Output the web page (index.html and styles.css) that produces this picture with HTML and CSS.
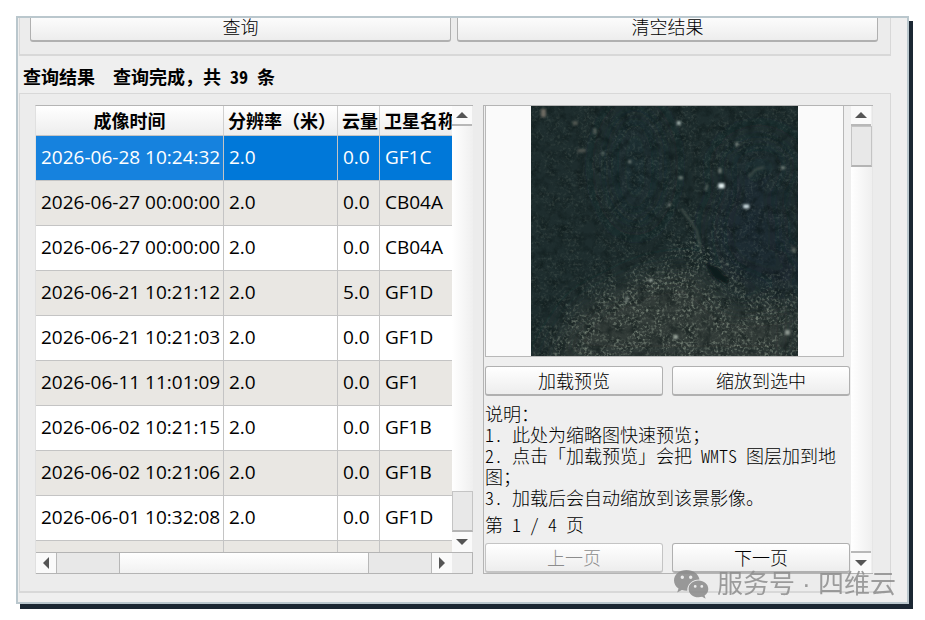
FILE: index.html
```
<!DOCTYPE html>
<html lang="zh-CN">
<head>
    <meta charset="UTF-8">
    <meta name="viewport" content="width=device-width, initial-scale=1.0">
    <title>查询结果</title>
    <link rel="stylesheet" href="styles.css">
</head>
<body>
    <main class="window">
        <div class="query-bar">
            <button type="button" class="btn">查询</button>
            <button type="button" class="btn">清空结果</button>
        </div>

        <h2 class="title">查询结果<span class="latin">  </span>查询完成，共<span class="latin"> 39 </span>条</h2>

        <section class="results">
            <!-- Scene list -->
            <div class="list">
                <div class="table-view">
                    <table>
                        <colgroup>
                            <col class="col-time">
                            <col class="col-res">
                            <col class="col-cloud">
                            <col class="col-sat">
                        </colgroup>
                        <thead>
                            <tr><th>成像时间</th><th>分辨率（米）</th><th>云量</th><th>卫星名称</th></tr>
                        </thead>
                        <tbody>
                            <tr class="selected"><td>2026-06-28 10:24:32</td><td>2.0</td><td>0.0</td><td>GF1C</td></tr>
                            <tr><td>2026-06-27 00:00:00</td><td>2.0</td><td>0.0</td><td>CB04A</td></tr>
                            <tr><td>2026-06-27 00:00:00</td><td>2.0</td><td>0.0</td><td>CB04A</td></tr>
                            <tr><td>2026-06-21 10:21:12</td><td>2.0</td><td>5.0</td><td>GF1D</td></tr>
                            <tr><td>2026-06-21 10:21:03</td><td>2.0</td><td>0.0</td><td>GF1D</td></tr>
                            <tr><td>2026-06-11 11:01:09</td><td>2.0</td><td>0.0</td><td>GF1</td></tr>
                            <tr><td>2026-06-02 10:21:15</td><td>2.0</td><td>0.0</td><td>GF1B</td></tr>
                            <tr><td>2026-06-02 10:21:06</td><td>2.0</td><td>0.0</td><td>GF1B</td></tr>
                            <tr><td>2026-06-01 10:32:08</td><td>2.0</td><td>0.0</td><td>GF1D</td></tr>
                            <tr><td></td><td></td><td></td><td></td></tr>
                        </tbody>
                    </table>
                </div>
                <div class="vscroll">
                    <button type="button" class="arrow up" aria-label="向上"></button>
                    <div class="track"></div>
                    <div class="thumb"></div>
                    <button type="button" class="arrow down" aria-label="向下"></button>
                </div>
                <div class="hscroll">
                    <button type="button" class="arrow left" aria-label="向左"></button>
                    <div class="thumb"></div>
                    <div class="track"></div>
                    <div class="thumb"></div>
                    <button type="button" class="arrow right" aria-label="向右"></button>
                </div>
                <div class="corner"></div>
            </div>

            <!-- Preview panel -->
            <div class="panel">
                <div class="panel-body">
                    <div class="preview">
                        <svg class="scene" viewBox="0 0 270 249" preserveAspectRatio="none" aria-hidden="true">
                            <defs>
                                <filter id="grain" x="0" y="0" width="100%" height="100%" color-interpolation-filters="sRGB">
                                    <feTurbulence type="fractalNoise" baseFrequency="0.11" numOctaves="5" seed="7"/>
                                    <feColorMatrix values="0 0 0 0 0.03  0 0 0 0 0.07  0 0 0 0 0.07  2.4 0 0 0 -1"/>
                                </filter>
                                <filter id="specks" x="0" y="0" width="100%" height="100%" color-interpolation-filters="sRGB">
                                    <feTurbulence type="fractalNoise" baseFrequency="0.37" numOctaves="2" seed="21" result="fine"/>
                                    <feColorMatrix values="0 0 0 0 0.5  0 0 0 0 0.55  0 0 0 0 0.5  0 2.4 0 0 -1.1" result="points"/>
                                    <feTurbulence type="fractalNoise" baseFrequency="0.06" numOctaves="3" seed="4"/>
                                    <feColorMatrix values="0 0 0 0 0  0 0 0 0 0  0 0 0 0 0  3 0 0 0 -0.8" result="patches"/>
                                    <feComposite in="points" in2="patches" operator="in"/>
                                    <feGaussianBlur stdDeviation="0.5"/>
                                </filter>
                                <filter id="soft" x="-30%" y="-30%" width="160%" height="160%">
                                    <feGaussianBlur stdDeviation="14"/>
                                </filter>
                                <filter id="dot" x="-50%" y="-50%" width="200%" height="200%">
                                    <feGaussianBlur stdDeviation="0.9"/>
                                </filter>
                                <mask id="land">
                                    <rect width="270" height="249" fill="#444"/>
                                    <path d="M0 270 L40 205 L95 165 L150 150 L170 110 L190 150 L215 190 L270 180 L290 270 Z" fill="#fff" filter="url(#soft)"/>
                                </mask>
                            </defs>
                            <rect width="270" height="249" fill="#1e2d2e"/>
                            <g filter="url(#soft)">
                                <ellipse cx="230" cy="60" rx="38" ry="30" fill="#1d2d32"/>
                                <ellipse cx="222" cy="125" rx="38" ry="50" fill="#1c2b33"/>
                                <ellipse cx="255" cy="165" rx="30" ry="22" fill="#1b2a33"/>
                                <ellipse cx="105" cy="60" rx="30" ry="60" fill="#1d2d30"/>
                                <path d="M10 260 L50 200 L110 170 L165 160 L200 200 L270 195 V260 Z" fill="#303b37"/>
                            </g>
                            <rect width="270" height="249" filter="url(#grain)" opacity="0.5"/>
                            <g mask="url(#land)"><rect width="270" height="249" filter="url(#specks)"/></g>
                            <path d="M175 156 L187 160 L200 174 L197 177 L184 171 Z" fill="#101a1c" filter="url(#dot)"/>
                            <g fill="#76817b" filter="url(#dot)">
                                <path d="M152 103 L158 111 L167 124 L171 142" fill="none" stroke="#3f4d49" stroke-width="2"/>
                                <path d="M219 71 L227 63 L235 61" fill="none" stroke="#3f4d49" stroke-width="2"/>
                                <path d="M176 84 L178 78" stroke="#5b6763" stroke-width="2"/>
                                <rect x="10" y="3" width="5" height="8" fill="#6c6961"/>
                                <rect x="42" y="15" width="5" height="4" fill="#515751"/>
                                <rect x="47" y="43" width="8" height="3" fill="#515751"/>
                                <rect x="63" y="22" width="3" height="6" fill="#56605b"/>
                                <rect x="147" y="15" width="4" height="4" fill="#9baaa7"/>
                                <rect x="189" y="77" width="6" height="5" fill="#e5f2f2"/>
                                <rect x="214" y="98" width="6" height="4" fill="#cbdbe0"/>
                                <rect x="189" y="62" width="3" height="5"/>
                                <rect x="206" y="36" width="3" height="4"/>
                                <rect x="149" y="70" width="4" height="3"/>
                                <rect x="71" y="46" width="3" height="2"/>
                                <rect x="98" y="54" width="3" height="3"/>
                                <rect x="138" y="97" width="3" height="3"/>
                                <rect x="252" y="60" width="4" height="3"/>
                                <rect x="263" y="141" width="4" height="5" fill="#59645f"/>
                                <rect x="119" y="172" width="4" height="3" fill="#9aa59c"/>
                                <rect x="95" y="190" width="3" height="5"/>
                                <rect x="144" y="228" width="4" height="4" fill="#a0aba3"/>
                                <rect x="256" y="223" width="5" height="5" fill="#8e9892"/>
                            </g>
                        </svg>
                    </div>
                    <div class="btn-row">
                        <button type="button" class="btn">加载预览</button>
                        <button type="button" class="btn">缩放到选中</button>
                    </div>
                    <div class="notes">
                        说明：<br>
                        <span class="latin">1. </span>此处为缩略图快速预览；<br>
                        <span class="latin">2. </span>点击「加载预览」会把<span class="latin"> WMTS </span>图层加到地图；<br>
                        <span class="latin">3. </span>加载后会自动缩放到该景影像。
                    </div>
                    <div class="page-info">第<span class="latin"> 1 / 4 </span>页</div>
                    <div class="btn-row">
                        <button type="button" class="btn" disabled>上一页</button>
                        <button type="button" class="btn">下一页</button>
                    </div>
                </div>
                <div class="vscroll">
                    <button type="button" class="arrow up" aria-label="向上"></button>
                    <div class="thumb"></div>
                    <div class="track"></div>
                    <button type="button" class="arrow down" aria-label="向下"></button>
                </div>
            </div>
        </section>

        <div class="watermark">
            <svg class="wechat" viewBox="0 0 36 30" aria-hidden="true">
                <path fill-rule="evenodd" d="M13.500 1C6.300 1 1 5.600 1 11.500c0 3.300 1.700 6.100 4.500 8l-1.300 4 4.700-2.400c1.500.4 3 .6 4.600.6h.8c-.3-6.300 5-11.100 12.200-11.100C25.500 5 20.300 1 13.500 1ZM9.300 6.500a1.700 1.700 0 1 1 0 3.400 1.700 1.700 0 0 1 0-3.400Zm8.400 0a1.700 1.700 0 1 1 0 3.400 1.700 1.700 0 0 1 0-3.400Z"/>
                <path fill-rule="evenodd" d="M25.500 11.500c-5.500 0-9.900 3.700-9.900 8.400s4.400 8.400 9.900 8.400c1.300 0 2.500-.2 3.600-.5l3.500 1.900-1-3.200c2.300-1.600 3.700-3.900 3.700-6.600 0-4.700-4.300-8.400-9.800-8.400ZM22.200 16a1.400 1.400 0 1 1 0 2.800 1.400 1.400 0 0 1 0-2.800Zm6.600 0a1.400 1.400 0 1 1 0 2.800 1.400 1.400 0 0 1 0-2.800Z"/>
            </svg>
            <span>服务号 · 四维云</span>
        </div>
    </main>
</body>
</html>
```
FILE: styles.css
```
* {
    box-sizing: border-box;
}
body {
    margin: 0;
    height: 100vh;
    padding: 16px;
    display: flex;
    background: #fff;
    color: #000;
    font-family: "Noto Sans CJK SC", sans-serif;
    font-size: 18px;
    line-height: 21px;
}

/* Window frame */
.window {
    position: relative;
    flex: 1;
    min-width: 0;
    display: flex;
    flex-direction: column;
    padding: 0 16px 9px 1px;
    border: 2px solid #bac7cd;
    background: #efefef;
    box-shadow: 4px 5px 0 #1b2733;
    overflow: hidden;
}

/* Latin text is set at half the width of a Chinese character */
.latin {
    font-feature-settings: "hwid";
    white-space: pre-wrap;
}

/* Buttons */
.btn {
    flex: 1;
    height: 30px;
    padding: 0 0 2px;
    border: 1px solid #b0b0b0;
    border-bottom: 2px solid #b0b0b0;
    border-radius: 3px;
    background: linear-gradient(#fff, #ededed);
    color: #000;
    font-family: inherit;
    font-size: 18px;
    font-weight: 300;
    line-height: 24px;
}
.btn:disabled {
    border-color: #c4c4c4;
    color: #8c8c8c;
}
.query-bar {
    display: flex;
    gap: 6px;
    margin-top: -6px;
    padding: 0 12px 12px 10px;
    border: 1px solid #d8d8d8;
    border-width: 0 1px 2px 1px;
    background: #ececec;
}
.btn-row {
    display: flex;
    gap: 9px;
}

.title {
    margin: 0;
    padding: 10px 4px 7px;
    font-size: 18px;
    font-weight: bold;
    line-height: 20px;
}

/* Results group */
.results {
    flex: 1;
    min-height: 0;
    display: flex;
    gap: 10px;
    padding: 11px 17px 17px 15px;
    border: 1px solid #d8d8d8;
    border-bottom-width: 2px;
    background: #ececec;
}

/* Scene list */
.list {
    flex: 438;
    min-width: 0;
    display: grid;
    grid-template-columns: minmax(0, 1fr) 21px;
    grid-template-rows: minmax(0, 1fr) 22px;
    border-top: 1px solid #b4b4b4;
    border-left: 1px solid #e0e0e0;
}
.table-view {
    overflow: hidden;
    background: #fff;
}
table {
    width: 452px;
    table-layout: fixed;
    border-collapse: separate;
    border-spacing: 0;
}
.col-time {
    width: 188px;
}
.col-res {
    width: 114px;
}
.col-cloud {
    width: 42px;
}
th {
    height: 30px;
    padding: 0 4px;
    border-right: 1px solid #d0d0d0;
    border-bottom: 1px solid #c4c4c4;
    background: linear-gradient(#fff, #ededed);
    font-size: 18px;
    font-weight: bold;
    text-align: left;
    white-space: nowrap;
}
th:first-child {
    text-align: center;
}
td {
    height: 45px;
    padding: 0 5px 2px;
    border-right: 1px solid #c4c4c4;
    border-bottom: 1px solid #c4c4c4;
    font-family: "Open Sans", "Noto Sans", sans-serif;
    font-size: 19px;
    line-height: 24px;
    white-space: nowrap;
}
tbody tr:nth-child(even) {
    background: #e9e7e3;
}
tbody .selected {
    background: #0078d9;
    color: #fff;
}
.selected td:first-child {
    background: #1682de;
}

/* Scroll bars */
.vscroll {
    display: flex;
    flex-direction: column;
}
.vscroll .track {
    flex: 1;
    background: linear-gradient(90deg, #fff, #efefef);
}
.vscroll .thumb {
    height: 41px;
    border: 1px solid #c4c4c4;
    border-bottom: 2px solid #b4b4b4;
    background: #e8e8e8;
}
.hscroll {
    display: flex;
    border: 1px solid #b4b4b4;
    border-width: 1px 0;
}
.hscroll .track {
    flex: 250;
    background: linear-gradient(#fff, #f1f1f1);
}
.hscroll .thumb {
    flex: 62;
    border: 1px solid #b8b8b8;
    border-width: 0 1px;
    background: #e8e8e8;
}
.corner {
    border: 1px solid #b4b4b4;
    border-left: 0;
}
.arrow {
    display: flex;
    align-items: center;
    justify-content: center;
    width: 20px;
    height: 20px;
    padding: 0;
    border: 0;
    background: #fafafa;
}
.arrow::before {
    content: "";
    border: 6px solid transparent;
}
.up {
    border-bottom: 2px solid #b8b8b8;
}
.up::before {
    border-top-width: 0;
    border-bottom-color: #555;
}
.down::before {
    border-bottom-width: 0;
    border-top-color: #555;
}
.left::before {
    border-left-width: 0;
    border-right-color: #555;
}
.right::before {
    border-right-width: 0;
    border-left-color: #555;
}

/* Preview panel */
.panel {
    flex: 390;
    min-width: 0;
    display: flex;
    border: 1px solid #b4b4b4;
    border-width: 1px 0 1px 1px;
    background: #efefef;
}
.panel-body {
    flex: 1;
    min-width: 0;
    display: flex;
    flex-direction: column;
    padding: 0 1px;
}
.preview {
    flex: 1;
    min-height: 0;
    display: flex;
    justify-content: center;
    margin: 0 6px 9px 0;
    border: 1px solid #b8b8b8;
    border-top: 0;
    background: #fafafa;
}
.scene {
    width: 75%;
    height: 100%;
}
.notes {
    margin-top: 7px;
    font-weight: 300;
}
.page-info {
    margin: 6px 0 8px;
    font-weight: 300;
}
.panel .vscroll {
    width: 22px;
    border-right: 1px solid #e6e6e6;
}
.panel .down {
    height: 22px;
    border-top: 2px solid #b8b8b8;
}

.watermark {
    position: absolute;
    right: 11px;
    bottom: 2px;
    display: flex;
    align-items: center;
    gap: 8px;
    color: #8e8e8e;
    font-family: "Liberation Sans", "Noto Sans CJK SC", sans-serif;
    font-size: 26px;
    line-height: 32px;
    white-space: nowrap;
    opacity: 0.85;
}
.wechat {
    width: 36px;
    height: 30px;
    fill: #8a8a8a;
}
```
